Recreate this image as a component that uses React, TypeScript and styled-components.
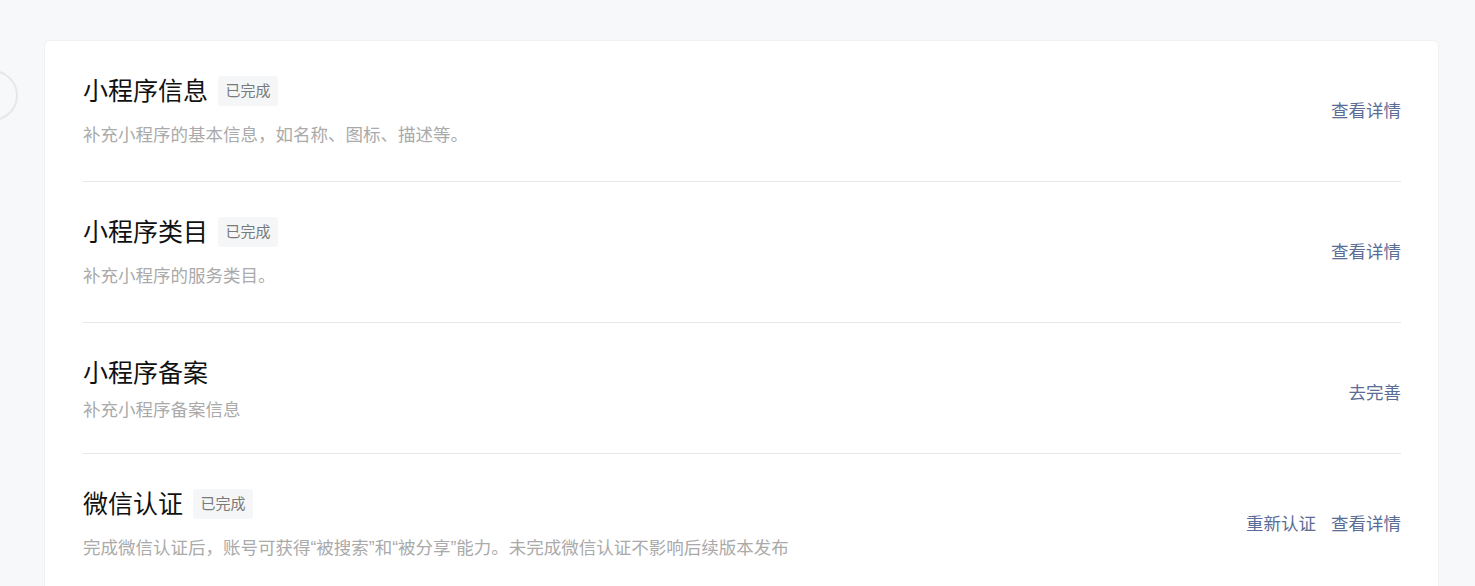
import React from "react";
import styled, { createGlobalStyle } from "styled-components";

const Global = createGlobalStyle`
  html, body { margin: 0; padding: 0; background: #f7f8fa; }
  body { font-family: "Liberation Sans", "Noto Sans CJK SC", sans-serif; }
  * { box-sizing: border-box; }
`;

const Page = styled.div`
  position: relative;
  height: 586px;
  padding: 41px 37px 0 45px;
  overflow: hidden;
`;

const SideCircle = styled.div`
  position: absolute;
  left: -33px;
  top: 70px;
  width: 51px;
  height: 51px;
  border-radius: 50%;
  border: 2px solid #e6e7e9;
`;

const Card = styled.section`
  background: #ffffff;
  border-radius: 5px;
  box-shadow: 0 0 0 1px #f0f1f3;
  padding: 0 37px 0 38px;
  min-height: 560px;
`;

const Row = styled.div<{ $tagged: boolean }>`
  display: flex;
  align-items: flex-start;
  justify-content: space-between;
  padding: 32px 0 ${(p) => (p.$tagged ? 33 : 30)}px;
  border-bottom: 1px solid #e7e7e7;
  &:last-child { border-bottom: none; }
`;

const Info = styled.div`
  display: flex;
  flex-direction: column;
`;

const Header = styled.div`
  display: flex;
  align-items: center;
  height: 36px;
`;

const Title = styled.h3`
  margin: 0;
  font-size: 25px;
  font-weight: 400;
  line-height: 30px;
  color: #111111;
`;

const Badge = styled.span`
  display: inline-flex;
  align-items: center;
  justify-content: center;
  height: 30px;
  width: 60px;
  padding-bottom: 3px;
  margin-left: 10px;
  border-radius: 3px;
  background: #f5f6f7;
  color: #7a7a7a;
  font-size: 15px;
`;

const Desc = styled.p<{ $tagged: boolean }>`
  margin: ${(p) => (p.$tagged ? 13 : 6)}px 0 0;
  font-size: 17.5px;
  line-height: 26px;
  color: #aaaaaa;
`;

const Actions = styled.div`
  display: flex;
  gap: 15px;
  margin-top: 26px;
`;

const Link = styled.a`
  font-size: 17.5px;
  line-height: 24px;
  color: #5a6d97;
  text-decoration: none;
  cursor: pointer;
  white-space: nowrap;
`;

type Item = {
  title: string;
  done: boolean;
  desc: string;
  actions: string[];
};

const items: Item[] = [
  {
    title: "小程序信息",
    done: true,
    desc: "补充小程序的基本信息，如名称、图标、描述等。",
    actions: ["查看详情"],
  },
  {
    title: "小程序类目",
    done: true,
    desc: "补充小程序的服务类目。",
    actions: ["查看详情"],
  },
  {
    title: "小程序备案",
    done: false,
    desc: "补充小程序备案信息",
    actions: ["去完善"],
  },
  {
    title: "微信认证",
    done: true,
    desc: "完成微信认证后，账号可获得\u201C被搜索\u201D和\u201C被分享\u201D能力。未完成微信认证不影响后续版本发布",
    actions: ["重新认证", "查看详情"],
  },
];

export default function App() {
  return (
    <>
      <Global />
      <Page>
        <SideCircle />
        <Card>
          {items.map((it) => (
            <Row key={it.title} $tagged={it.done}>
              <Info>
                <Header>
                  <Title>{it.title}</Title>
                  {it.done && <Badge>已完成</Badge>}
                </Header>
                <Desc $tagged={it.done}>{it.desc}</Desc>
              </Info>
              <Actions>
                {it.actions.map((a) => (
                  <Link key={a}>{a}</Link>
                ))}
              </Actions>
            </Row>
          ))}
        </Card>
      </Page>
    </>
  );
}
